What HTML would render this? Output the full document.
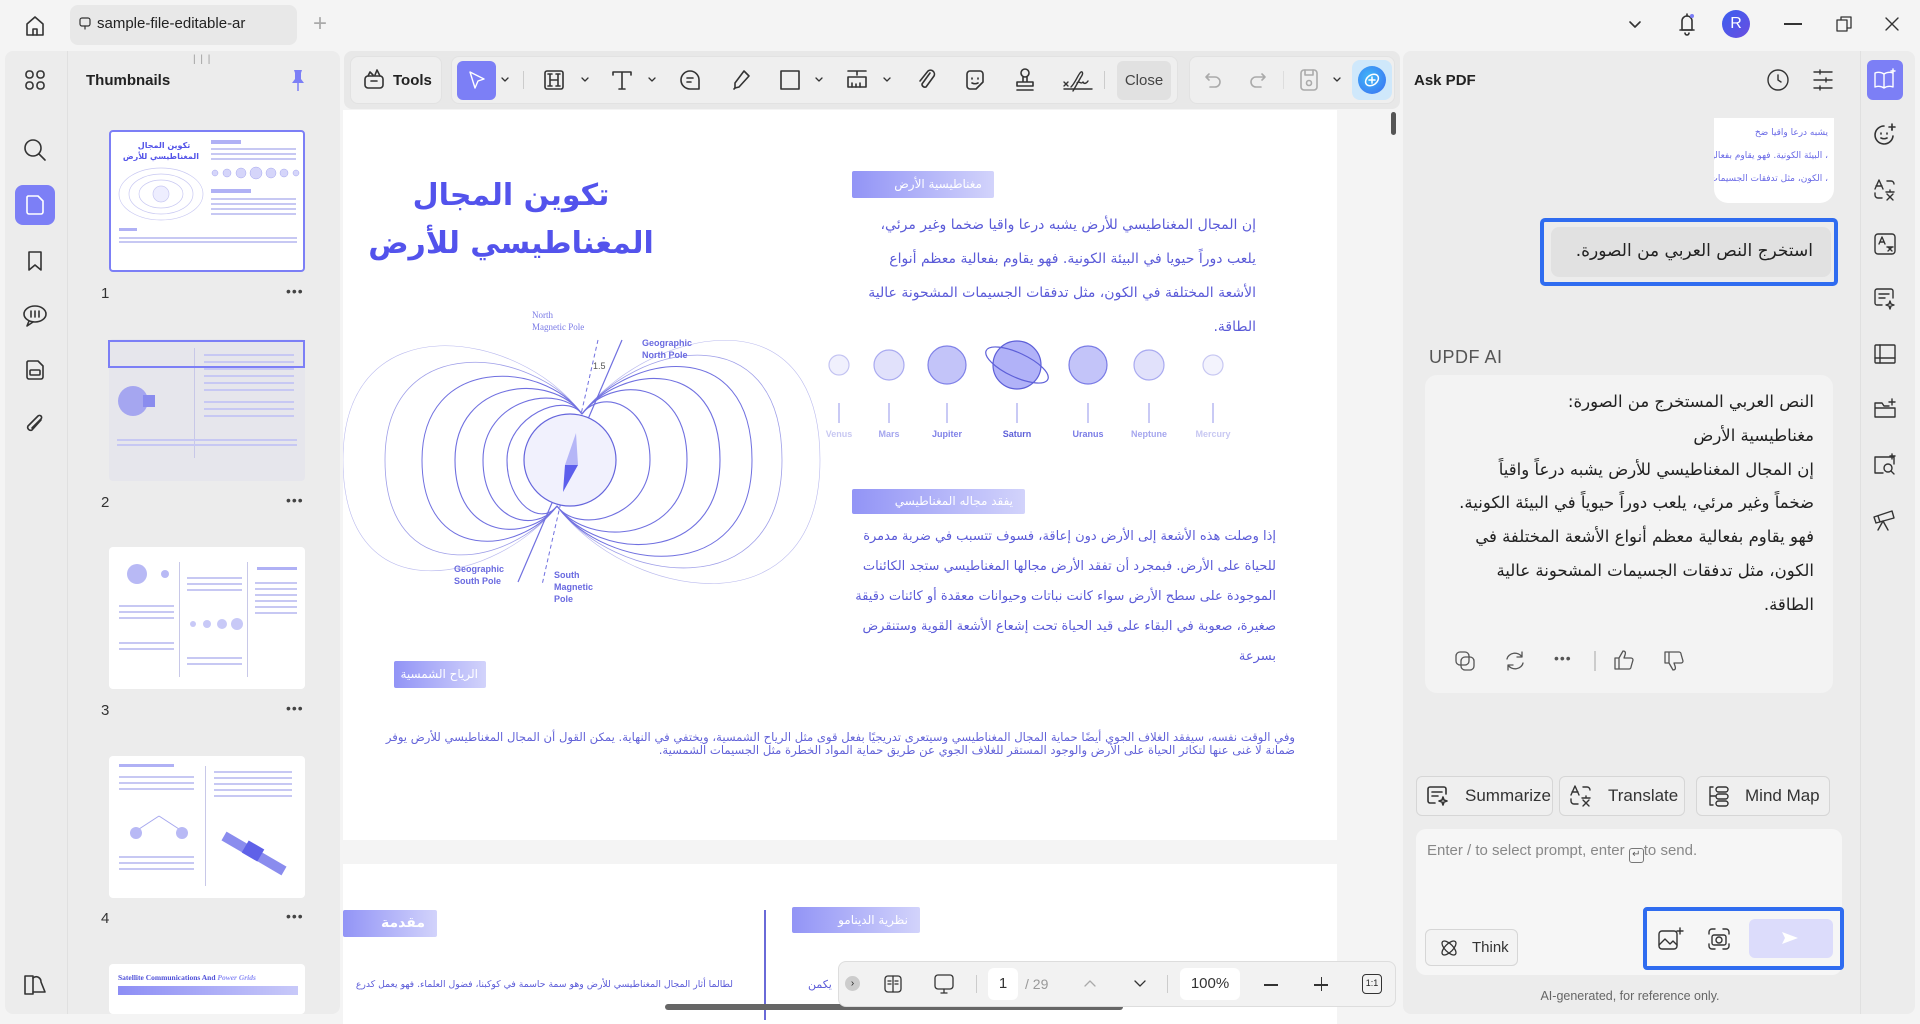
<!DOCTYPE html>
<html><head><meta charset="utf-8">
<style>
*{box-sizing:border-box;margin:0;padding:0}
body{width:1920px;height:1020px;overflow:hidden;background:#f4f4f4;font-family:"Liberation Sans","DejaVu Sans",sans-serif;position:relative;color:#222}
.abs{position:absolute}
.ar{font-family:"DejaVu Sans",sans-serif;direction:rtl}
svg.i{position:absolute;fill:none;stroke:#333;stroke-width:1.6;stroke-linecap:round;stroke-linejoin:round}
.lab{position:absolute;background:linear-gradient(90deg,#9294f6,#d2d3fb);color:#fff;font-family:"DejaVu Sans",sans-serif;font-size:12px;direction:rtl;text-align:right;padding-right:12px;border-radius:2px}
.p{position:absolute;direction:rtl;text-align:right;font-family:"DejaVu Sans",sans-serif;color:#5b5bd8;font-size:14px;white-space:nowrap}
.thumb{position:absolute;left:109px;width:196px;height:142px;background:#fff;border-radius:4px;overflow:hidden}
.tl{position:absolute;height:2px;background:#c7c8f3}
.num{position:absolute;left:101px;font-size:15px;color:#333}
.dots{position:absolute;left:286px;font-size:14px;color:#444;letter-spacing:1px}
.btn{position:absolute;border:1px solid #d6d6d6;border-radius:6px;background:#efefef;font-size:17px;color:#333;display:flex;align-items:center}
</style></head><body>

<!-- top bar -->
<svg class="i" style="left:22px;top:13px" width="26" height="26" viewBox="0 0 26 26"><path d="M5 22V11L13 4L21 11V22Z"/><path d="M11 22v-6h4v6"/></svg>
<div class="abs" style="left:70px;top:5px;width:227px;height:40px;background:#e8e8e8;border-radius:8px"></div>
<svg class="i" style="left:78px;top:17px;stroke-width:1.2" width="14" height="14" viewBox="0 0 14 14"><rect x="2" y="1" width="10" height="8" rx="2"/><path d="M7 9v3"/></svg>
<div class="abs" style="left:97px;top:15px;font-size:15px;color:#222">sample-file-editable-ar</div>
<div class="abs" style="left:313px;top:10px;font-size:24px;color:#aaa;font-weight:300">+</div>
<svg class="i" style="left:1627px;top:18px" width="16" height="14" viewBox="0 0 16 14"><path d="M3 4l5 5 5-5"/></svg>
<svg class="i" style="left:1676px;top:11px" width="22" height="26" viewBox="0 0 22 26"><path d="M6 19V10a5 5 0 0 1 10 0v9z"/><path d="M4 19h14M9 22a2 2 0 0 0 4 0M11 3v2"/><circle cx="16" cy="5" r="2" fill="#7a7cf5" stroke="none"/></svg>
<div class="abs" style="left:1722px;top:10px;width:28px;height:28px;border-radius:50%;background:linear-gradient(135deg,#3a5ef0,#6a4ee0);color:#fff;font-size:16px;text-align:center;line-height:28px">R</div>
<div class="abs" style="left:1784px;top:23px;width:18px;height:1.5px;background:#333"></div>
<svg class="i" style="left:1834px;top:14px;stroke-width:1.3" width="20" height="20" viewBox="0 0 20 20"><rect x="3" y="6" width="10" height="11"/><path d="M7 6V3h10v11h-4"/></svg>
<svg class="i" style="left:1884px;top:16px;stroke-width:1.4" width="16" height="16" viewBox="0 0 16 16"><path d="M2 2l12 12M14 2L2 14"/></svg>

<!-- left rail + thumbs panel -->
<div class="abs" style="left:5px;top:51px;width:335px;height:963px;background:#ececec;border-radius:8px"></div>
<div class="abs" style="left:67px;top:51px;width:1px;height:963px;background:#e0e0e0"></div>
<svg class="i" style="left:23px;top:68px" width="24" height="24" viewBox="0 0 24 24"><rect x="3" y="3" width="7" height="7" rx="3"/><rect x="14" y="3" width="7" height="7" rx="3"/><rect x="3" y="14" width="7" height="7" rx="3"/><rect x="14" y="14" width="7" height="7" rx="3"/></svg>
<svg class="i" style="left:22px;top:137px" width="26" height="26" viewBox="0 0 26 26"><circle cx="11" cy="11" r="8"/><path d="M17 17l6 6"/></svg>
<div class="abs" style="left:15px;top:185px;width:40px;height:40px;background:#7c7ff6;border-radius:8px"></div>
<svg class="i" style="left:23px;top:193px;stroke:#fff" width="24" height="24" viewBox="0 0 24 24"><path d="M5 3h10l5 5v11a2 2 0 0 1-2 2H6a2 2 0 0 1-2-2V4z"/></svg>
<svg class="i" style="left:23px;top:249px" width="24" height="24" viewBox="0 0 24 24"><path d="M6 3h12v18l-6-5-6 5z"/></svg>
<svg class="i" style="left:21px;top:302px" width="28" height="26" viewBox="0 0 28 26"><ellipse cx="14" cy="12" rx="11" ry="8"/><path d="M8 19l-2 5 6-4M10 9v6M14 9v6M18 9v6"/></svg>
<svg class="i" style="left:23px;top:358px" width="24" height="24" viewBox="0 0 24 24"><path d="M5 3h10l5 5v11a2 2 0 0 1-2 2H6a2 2 0 0 1-2-2V4z"/><rect x="7" y="12" width="10" height="5" rx="1"/></svg>
<svg class="i" style="left:23px;top:412px" width="24" height="26" viewBox="0 0 24 26"><path d="M18 8L9 18a3 3 0 0 1-4-4l10-10a2 2 0 0 1 3 3L9 16"/></svg>
<svg class="i" style="left:22px;top:973px" width="26" height="24" viewBox="0 0 26 24"><path d="M3 3h8v18H3z"/><path d="M11 5c4-3 8 0 8 4l4 10H11"/></svg>

<div class="abs" style="left:86px;top:72px;font-size:15px;font-weight:bold;color:#222">Thumbnails</div>
<div class="abs" style="left:193px;top:54px;font-size:10px;color:#999;letter-spacing:1px">| | |</div>
<svg class="abs" style="left:290px;top:68px" width="16" height="24" viewBox="0 0 16 24"><path d="M4 2h8l-1 3v6l3 4H2l3-4V5z" fill="#7c7ff6"/><path d="M8 15v8" stroke="#7c7ff6" stroke-width="1.5"/></svg>

<!-- thumb1 -->
<div class="thumb" style="top:130px;border:2px solid #7c7ff6">
 <div class="abs ar" style="left:18px;top:8px;width:70px;font-size:8px;color:#5454e8;font-weight:bold;line-height:11px;text-align:center;white-space:nowrap">تكوين المجال<br>المغناطيسي للأرض</div>
 <svg class="abs" style="left:5px;top:32px" width="90" height="60" viewBox="0 0 90 60"><g fill="none" stroke="#c8c8f2" stroke-width=".7"><ellipse cx="45" cy="30" rx="42" ry="26"/><ellipse cx="45" cy="30" rx="32" ry="20"/><ellipse cx="45" cy="30" rx="22" ry="14"/><circle cx="45" cy="30" r="8" fill="#eef"/></g></svg>
 <div class="tl" style="left:100px;top:8px;width:30px;background:#b0b1f5;height:4px"></div>
 <div class="tl" style="left:100px;top:16px;width:85px"></div><div class="tl" style="left:100px;top:21px;width:85px"></div><div class="tl" style="left:100px;top:26px;width:85px"></div>
 <svg class="abs" style="left:98px;top:34px" width="92" height="14" viewBox="0 0 92 14"><g fill="#d5d5fa" stroke="#a5a6ee" stroke-width=".5"><circle cx="6" cy="7" r="3"/><circle cx="18" cy="7" r="4"/><circle cx="32" cy="7" r="5"/><circle cx="47" cy="7" r="6"/><circle cx="62" cy="7" r="5"/><circle cx="75" cy="7" r="4"/><circle cx="87" cy="7" r="3"/></g></svg>
 <div class="tl" style="left:100px;top:57px;width:40px;background:#b0b1f5;height:4px"></div>
 <div class="tl" style="left:100px;top:66px;width:85px"></div><div class="tl" style="left:100px;top:71px;width:85px"></div><div class="tl" style="left:100px;top:76px;width:85px"></div><div class="tl" style="left:100px;top:81px;width:85px"></div>
 <div class="tl" style="left:8px;top:96px;width:18px;background:#b0b1f5;height:3px"></div>
 <div class="tl" style="left:8px;top:105px;width:178px"></div><div class="tl" style="left:8px;top:109px;width:178px"></div>
</div>
<div class="num" style="top:285px">1</div><div class="dots" style="top:283px">•••</div>
<!-- thumb2 -->
<div class="thumb" style="top:339px;background:#e6e6ec">
 <div class="abs" style="left:85px;top:9px;width:1px;height:110px;background:#c8c8e8"></div>
 <svg class="abs" style="left:6px;top:42px" width="55" height="40" viewBox="0 0 55 40"><ellipse cx="18" cy="20" rx="15" ry="15" fill="#a5a6f0"/><rect x="28" y="14" width="12" height="12" fill="#8a8cee"/></svg>
 <div class="tl" style="left:95px;top:15px;width:90px"></div><div class="tl" style="left:95px;top:22px;width:90px"></div><div class="tl" style="left:95px;top:29px;width:90px"></div><div class="tl" style="left:95px;top:36px;width:90px"></div><div class="tl" style="left:95px;top:43px;width:90px"></div><div class="tl" style="left:95px;top:50px;width:90px"></div>
 <div class="tl" style="left:95px;top:62px;width:90px"></div><div class="tl" style="left:95px;top:69px;width:90px"></div><div class="tl" style="left:95px;top:76px;width:90px"></div>
 <div class="tl" style="left:8px;top:100px;width:180px"></div><div class="tl" style="left:8px;top:105px;width:180px"></div>
</div>
<div class="abs" style="left:108px;top:340px;width:197px;height:28px;border:2px solid #7c7ff6"></div>
<div class="num" style="top:494px">2</div><div class="dots" style="top:492px">•••</div>
<!-- thumb3 -->
<div class="thumb" style="top:547px">
 <div class="abs" style="left:70px;top:15px;width:1px;height:115px;background:#c8c8e8"></div>
 <div class="abs" style="left:138px;top:15px;width:1px;height:115px;background:#c8c8e8"></div>
 <svg class="abs" style="left:10px;top:12px" width="55" height="30" viewBox="0 0 55 30"><circle cx="18" cy="15" r="10" fill="#b8b9f5"/><circle cx="46" cy="15" r="4" fill="#b8b9f5"/></svg>
 <div class="tl" style="left:148px;top:20px;width:40px;height:3px;background:#b0b1f5"></div>
 <div class="tl" style="left:10px;top:58px;width:55px"></div><div class="tl" style="left:10px;top:64px;width:55px"></div><div class="tl" style="left:10px;top:70px;width:55px"></div><div class="tl" style="left:10px;top:95px;width:55px"></div><div class="tl" style="left:10px;top:101px;width:55px"></div>
 <div class="tl" style="left:78px;top:30px;width:55px"></div><div class="tl" style="left:78px;top:36px;width:55px"></div><div class="tl" style="left:78px;top:42px;width:55px"></div><div class="tl" style="left:78px;top:110px;width:55px"></div><div class="tl" style="left:78px;top:116px;width:55px"></div>
 <svg class="abs" style="left:78px;top:70px" width="58" height="14"><g fill="#c8c9f7"><circle cx="6" cy="7" r="3"/><circle cx="20" cy="7" r="4"/><circle cx="35" cy="7" r="5"/><circle cx="50" cy="7" r="6"/></g></svg>
 <div class="tl" style="left:146px;top:35px;width:42px"></div><div class="tl" style="left:146px;top:41px;width:42px"></div><div class="tl" style="left:146px;top:47px;width:42px"></div><div class="tl" style="left:146px;top:53px;width:42px"></div><div class="tl" style="left:146px;top:59px;width:42px"></div><div class="tl" style="left:146px;top:65px;width:42px"></div>
</div>
<div class="num" style="top:702px">3</div><div class="dots" style="top:700px">•••</div>
<!-- thumb4 -->
<div class="thumb" style="top:756px">
 <div class="abs" style="left:96px;top:10px;width:1px;height:120px;background:#c8c8e8"></div>
 <div class="tl" style="left:10px;top:8px;width:55px;height:3px;background:#b0b1f5"></div>
 <div class="tl" style="left:10px;top:20px;width:75px"></div><div class="tl" style="left:10px;top:26px;width:75px"></div><div class="tl" style="left:10px;top:32px;width:75px"></div>
 <svg class="abs" style="left:15px;top:55px" width="70" height="30"><path d="M35 5L12 20M35 5L58 20" stroke="#a5a6ee"/><circle cx="12" cy="22" r="6" fill="#b8b9f5"/><circle cx="58" cy="22" r="6" fill="#b8b9f5"/></svg>
 <div class="tl" style="left:10px;top:100px;width:75px"></div><div class="tl" style="left:10px;top:106px;width:75px"></div><div class="tl" style="left:10px;top:112px;width:75px"></div>
 <div class="tl" style="left:105px;top:15px;width:78px"></div><div class="tl" style="left:105px;top:21px;width:78px"></div><div class="tl" style="left:105px;top:27px;width:78px"></div><div class="tl" style="left:105px;top:33px;width:78px"></div><div class="tl" style="left:105px;top:39px;width:78px"></div>
 <svg class="abs" style="left:110px;top:70px" width="70" height="50"><path d="M5 10L65 45" stroke="#8a8cee" stroke-width="10"/><rect x="25" y="18" width="18" height="14" fill="#5f61e8" transform="rotate(30 34 25)"/></svg>
</div>
<div class="num" style="top:910px">4</div><div class="dots" style="top:908px">•••</div>
<div class="thumb" style="top:964px;height:50px">
 <div class="abs" style="left:9px;top:9px;font-family:'Liberation Serif',serif;font-size:7.5px;color:#4f50d8;font-weight:bold">Satellite Communications And <i style="color:#8d8ef5">Power Grids</i></div>
 <div class="abs" style="left:9px;top:22px;width:180px;height:9px;background:linear-gradient(90deg,#8d8ef5,#c8c9f9)"></div>
</div>

<!-- toolbar -->
<div class="abs" style="left:344px;top:51px;width:1056px;height:58px;background:#e8e8e8;border-radius:8px"></div>
<div class="abs" style="left:350px;top:56px;width:92px;height:48px;background:#efefef;border-radius:8px;border:1px solid #e2e2e2"></div>
<svg class="i" style="left:362px;top:67px" width="24" height="24" viewBox="0 0 24 24"><rect x="3" y="9" width="18" height="12" rx="3"/><path d="M9 14h6M6 9l2-4 3 3M13 8l2-5 3 6"/></svg>
<div class="abs" style="left:393px;top:72px;font-size:15px;font-weight:bold">Tools</div>
<div class="abs" style="left:451px;top:56px;width:727px;height:48px;background:#efefef;border-radius:8px;border:1px solid #e2e2e2"></div>
<div class="abs" style="left:457px;top:61px;width:39px;height:39px;background:#7c7ff6;border-radius:6px"></div>
<svg class="i" style="left:466px;top:69px;stroke:#fff;stroke-width:1.4" width="22" height="22" viewBox="0 0 22 22"><path d="M4 3l14 7-6 2-3 7z"/></svg>
<svg class="i" style="left:500px;top:76px;stroke-width:1.3" width="10" height="8" viewBox="0 0 10 8"><path d="M2 2l3 3 3-3"/></svg>
<div class="abs" style="left:523px;top:71px;width:1px;height:18px;background:#ccc"></div>
<svg class="i" style="left:542px;top:68px" width="24" height="24" viewBox="0 0 24 24"><rect x="3" y="3" width="18" height="18" rx="2"/><path d="M8 6v12M16 6v12M8 12h8M6 6h4M14 6h4M6 18h4M14 18h4"/></svg>
<svg class="i" style="left:580px;top:76px;stroke-width:1.3" width="10" height="8" viewBox="0 0 10 8"><path d="M2 2l3 3 3-3"/></svg>
<svg class="i" style="left:610px;top:68px" width="24" height="24" viewBox="0 0 24 24"><path d="M3 4h18M12 4v17M9 21h6M3 4v3M21 4v3"/></svg>
<svg class="i" style="left:647px;top:76px;stroke-width:1.3" width="10" height="8" viewBox="0 0 10 8"><path d="M2 2l3 3 3-3"/></svg>
<svg class="i" style="left:678px;top:68px" width="24" height="24" viewBox="0 0 24 24"><path d="M12 3a9 9 0 1 0 0 18h9v-9a9 9 0 0 0-9-9z"/><path d="M9 10h6M9 14h4"/></svg>
<svg class="i" style="left:729px;top:68px" width="24" height="24" viewBox="0 0 24 24"><path d="M15 3l5 5-10 11-4 1 0-5z"/><path d="M5 21l1-1"/></svg>
<svg class="i" style="left:779px;top:69px" width="22" height="22" viewBox="0 0 22 22"><rect x="2" y="2" width="18" height="18"/></svg>
<svg class="i" style="left:814px;top:76px;stroke-width:1.3" width="10" height="8" viewBox="0 0 10 8"><path d="M2 2l3 3 3-3"/></svg>
<svg class="i" style="left:845px;top:68px" width="24" height="24" viewBox="0 0 24 24"><path d="M3 3h18M12 3v4M3 9h18v10H3z"/><path d="M7 15v4M11 16v3M15 15v4"/></svg>
<svg class="i" style="left:882px;top:76px;stroke-width:1.3" width="10" height="8" viewBox="0 0 10 8"><path d="M2 2l3 3 3-3"/></svg>
<svg class="i" style="left:914px;top:67px" width="24" height="26" viewBox="0 0 24 26"><path d="M16 6L8 17a3 3 0 0 0 4 3l8-11a4 4 0 0 0-6-5L6 14"/></svg>
<svg class="i" style="left:963px;top:68px" width="24" height="24" viewBox="0 0 24 24"><path d="M4 6a3 3 0 0 1 3-3h10a3 3 0 0 1 3 3v8l-7 7H7a3 3 0 0 1-3-3z"/><path d="M9 10v1M15 10v1M9 15c2 1 4 1 6 0"/></svg>
<svg class="i" style="left:1013px;top:67px" width="24" height="26" viewBox="0 0 24 26"><circle cx="12" cy="6" r="4"/><path d="M10 10v5M14 10v5M4 15h16v4H4zM4 23h16"/></svg>
<svg class="i" style="left:1061px;top:67px;stroke-width:1.4" width="34" height="26" viewBox="0 0 34 26"><path d="M3 15l4 4M7 15l-4 4M10 20c4-4 6-10 9-14 2-3 4 0 1 4l-8 14M16 16c2-3 4 2 6-1 1 2 3 2 5-1"/><path d="M3 22h28"/></svg>
<div class="abs" style="left:1104px;top:71px;width:1px;height:18px;background:#ccc"></div>
<div class="abs" style="left:1117px;top:61px;width:54px;height:39px;background:#e1e1e1;border-radius:6px;font-size:15px;color:#444;text-align:center;line-height:39px">Close</div>
<div class="abs" style="left:1189px;top:56px;width:206px;height:48px;background:#efefef;border-radius:8px;border:1px solid #e2e2e2"></div>
<svg class="i" style="left:1203px;top:70px;stroke:#aaa" width="20" height="20" viewBox="0 0 20 20"><path d="M6 4L3 7l3 3M3 7h9a5 5 0 0 1 0 10H7"/></svg>
<svg class="i" style="left:1248px;top:70px;stroke:#aaa" width="20" height="20" viewBox="0 0 20 20"><path d="M14 4l3 3-3 3M17 7H8a5 5 0 0 0 0 10h5"/></svg>
<div class="abs" style="left:1283px;top:71px;width:1px;height:18px;background:#ddd"></div>
<svg class="i" style="left:1299px;top:68px;stroke:#aaa" width="20" height="24" viewBox="0 0 20 24"><rect x="2" y="2" width="16" height="20" rx="3"/><path d="M6 2v5h8V2"/><circle cx="10" cy="15" r="2.5"/></svg>
<svg class="i" style="left:1332px;top:76px;stroke-width:1.3" width="10" height="8" viewBox="0 0 10 8"><path d="M2 2l3 3 3-3"/></svg>
<div class="abs" style="left:1352px;top:60px;width:40px;height:40px;background:#cfe8fb;border-radius:8px"></div>
<div class="abs" style="left:1358px;top:66px;width:28px;height:28px;border-radius:50%;background:radial-gradient(circle at 40% 40%,#40b8f8,#3b6cf2)"></div>
<svg class="i" style="left:1362px;top:70px;stroke:#fff;stroke-width:1.5" width="20" height="20" viewBox="0 0 20 20"><ellipse cx="10" cy="10" rx="7" ry="5" transform="rotate(-35 10 10)"/><path d="M10 7v6M7 10h6"/></svg>

<!-- document area -->
<div class="abs" style="left:343px;top:110px;width:994px;height:730px;background:#fff"></div>
<div class="abs" style="left:1391px;top:112px;width:5px;height:23px;background:#555;border-radius:3px"></div>
<div class="abs ar" style="left:311px;top:172px;width:400px;text-align:center;font-size:30px;font-weight:bold;color:#5353ec;line-height:48px;white-space:nowrap">تكوين المجال<br>المغناطيسي للأرض</div>

<svg class="abs" style="left:343px;top:300px" width="500" height="320" viewBox="343 300 500 320">
 <g fill="none" stroke="#7070e0">
  <path d="M582 414 C521 330 343 301 343 460 C343 619 500 581 557 506" stroke-width=".6" stroke="#b9b9ee"/>
  <path d="M582 414 C532 346 385 330 385 460 C385 590 511 567 557 506" stroke-width=".8" stroke="#9d9de8"/>
  <path d="M582 414 C542 359 422 356 422 460 C422 564 520 555 557 506" stroke-width="1"/>
  <path d="M582 414 C551 371 455 380 455 460 C455 540 528 544 557 506" stroke-width="1.1"/>
  <path d="M582 414 C559 382 483 399 483 460 C483 521 535 535 557 506" stroke-width="1.1"/>
  <path d="M582 414 C565 391 507 416 507 460 C507 504 541 527 557 506" stroke-width="1.1"/>
  <path d="M582 414 C645 331 820 285 820 460 C820 635 625 599 557 506" stroke-width=".6" stroke="#b9b9ee"/>
  <path d="M582 414 C635 344 782 312 782 460 C782 608 614 584 557 506" stroke-width=".8" stroke="#9d9de8"/>
  <path d="M582 414 C628 354 752 333 752 460 C752 587 606 573 557 506" stroke-width="1"/>
  <path d="M582 414 C620 365 720 355 720 460 C720 565 598 562 557 506" stroke-width="1.1"/>
  <path d="M582 414 C611 375 687 378 687 460 C687 542 589 549 557 506" stroke-width="1.1"/>
  <path d="M582 414 C602 388 650 404 650 460 C650 516 579 536 557 506" stroke-width="1.1"/>
  <path d="M622 340 L 518 582" stroke-width="1.2"/>
  <path d="M598 340 L 542 585" stroke-width="1" stroke-dasharray="4 3"/>
 </g>
 <circle cx="570" cy="460" r="46" fill="#f1f1fd" stroke="#6565dc" stroke-width="1.2"/>
 <path d="M576 433 L565 465 L578 465Z" fill="#b5b6f7"/>
 <path d="M565 465 L578 465 L563 492Z" fill="#5d5fec"/>
 <text x="532" y="318" font-family="Liberation Serif" font-size="9" fill="#7a7ae6">North</text>
 <text x="532" y="330" font-family="Liberation Serif" font-size="9" fill="#7a7ae6">Magnetic Pole</text>
 <text x="642" y="346" font-family="Liberation Sans" font-size="9" font-weight="bold" fill="#6a6ae0">Geographic</text>
 <text x="642" y="358" font-family="Liberation Sans" font-size="9" font-weight="bold" fill="#6a6ae0">North Pole</text>
 <text x="593" y="369" font-family="Liberation Sans" font-size="9" fill="#555">1.5</text>
 <text x="454" y="572" font-family="Liberation Sans" font-size="9" font-weight="bold" fill="#6a6ae0">Geographic</text>
 <text x="454" y="584" font-family="Liberation Sans" font-size="9" font-weight="bold" fill="#6a6ae0">South Pole</text>
 <text x="554" y="578" font-family="Liberation Sans" font-size="9" font-weight="bold" fill="#6a6ae0">South</text>
 <text x="554" y="590" font-family="Liberation Sans" font-size="9" font-weight="bold" fill="#6a6ae0">Magnetic</text>
 <text x="554" y="602" font-family="Liberation Sans" font-size="9" font-weight="bold" fill="#6a6ae0">Pole</text>
</svg>

<div class="lab" style="left:852px;top:171px;width:142px;height:27px;line-height:27px">مغناطيسية الأرض</div>
<div class="p" style="right:664px;top:208px;line-height:34px">إن المجال المغناطيسي للأرض يشبه درعا واقيا ضخما وغير مرئي،<br>يلعب دوراً حيويا في البيئة الكونية. فهو يقاوم بفعالية معظم أنواع<br>الأشعة المختلفة في الكون، مثل تدفقات الجسيمات المشحونة عالية<br>الطاقة.</div>

<svg class="abs" style="left:820px;top:330px" width="470" height="115" viewBox="820 330 470 115">
 <g stroke="#7a7ae6" stroke-width="1.2">
  <circle cx="839" cy="365" r="10" fill="#f0f0fd" stroke="#c4c4f2"/>
  <circle cx="889" cy="365" r="15" fill="#e1e1fb" stroke="#a9aaf0"/>
  <circle cx="947" cy="365" r="19" fill="#c3c4f9" stroke="#8082e8"/>
  <circle cx="1017" cy="365" r="24" fill="#b1b2f8" stroke="#5d5fd8"/>
  <ellipse cx="1017" cy="365" rx="34" ry="12" fill="none" stroke="#5d5fd8" transform="rotate(25 1017 365)"/>
  <circle cx="1088" cy="365" r="19" fill="#c3c4f9" stroke="#7a7ce6"/>
  <circle cx="1149" cy="365" r="15" fill="#e1e1fb" stroke="#a9aaf0"/>
  <circle cx="1213" cy="365" r="10" fill="#f3f3fd" stroke="#c8c8f2"/>
  <path d="M839 403v20M889 403v20M947 403v20M1017 403v20M1088 403v20M1149 403v20M1213 403v20" stroke="#a5a6ee"/>
 </g>
 <g font-family="Liberation Sans" font-size="9" font-weight="bold" text-anchor="middle">
  <text x="839" y="437" fill="#c8c8f2">Venus</text><text x="889" y="437" fill="#a5a6ee">Mars</text><text x="947" y="437" fill="#8082e8">Jupiter</text><text x="1017" y="437" fill="#5d5fd8">Saturn</text><text x="1088" y="437" fill="#7a7ce6">Uranus</text><text x="1149" y="437" fill="#a5a6ee">Neptune</text><text x="1213" y="437" fill="#c8c8f2">Mercury</text>
 </g>
</svg>

<div class="lab" style="left:852px;top:489px;width:173px;height:25px;line-height:25px">يفقد مجاله المغناطيسي</div>
<div class="p" style="right:644px;top:522px;line-height:30px;font-size:13px">إذا وصلت هذه الأشعة إلى الأرض دون إعاقة، فسوف تتسبب في ضربة مدمرة<br>للحياة على الأرض. فبمجرد أن تفقد الأرض مجالها المغناطيسي ستجد الكائنات<br>الموجودة على سطح الأرض سواء كانت نباتات وحيوانات معقدة أو كائنات دقيقة<br>صغيرة، صعوبة في البقاء على قيد الحياة تحت إشعاع الأشعة القوية وستنقرض<br>بسرعة</div>
<div class="lab" style="left:394px;top:661px;width:92px;height:27px;line-height:27px;padding-right:8px">الرياح الشمسية</div>
<div class="p" style="right:625px;top:731px;font-size:11.6px;line-height:13px;color:#6262d8">وفي الوقت نفسه، سيفقد الغلاف الجوي أيضًا حماية المجال المغناطيسي وسيتعرى تدريجيًا بفعل قوى مثل الرياح الشمسية، ويختفي في النهاية. يمكن القول أن المجال المغناطيسي للأرض يوفر<br>ضمانة لا غنى عنها لتكاثر الحياة على الأرض والوجود المستقر للغلاف الجوي عن طريق حماية المواد الخطرة مثل الجسيمات الشمسية.</div>

<!-- page 2 -->
<div class="abs" style="left:343px;top:864px;width:994px;height:160px;background:#fff"></div>
<div class="lab" style="left:343px;top:910px;width:94px;height:27px;line-height:27px;font-size:14px;font-weight:bold">مقدمة</div>
<div class="lab" style="left:792px;top:907px;width:128px;height:26px;line-height:26px">نظرية الدينامو</div>
<div class="abs" style="left:764px;top:910px;width:1.5px;height:110px;background:#6a6ad8"></div>
<div class="p" style="right:1187px;top:979px;font-size:9.3px">لطالما أثار المجال المغناطيسي للأرض وهو سمة حاسمة في كوكبنا، فضول العلماء. فهو يعمل كدرع</div>
<div class="p" style="left:808px;top:978px;font-size:11px;direction:ltr">يكمن</div>
<div class="abs" style="left:665px;top:1004px;width:458px;height:6px;background:#666;border-radius:3px"></div>

<!-- bottom floating bar -->
<div class="abs" style="left:838px;top:961px;width:558px;height:46px;background:#f2f2f2;border-radius:8px;border:1px solid #ddd"></div>
<div class="abs" style="left:845px;top:976px;width:15px;height:15px;border-radius:50%;background:#ccc;font-size:10px;text-align:center;line-height:15px">›</div>
<svg class="i" style="left:882px;top:973px;stroke-width:1.3" width="22" height="22" viewBox="0 0 22 22"><rect x="3" y="3" width="16" height="16" rx="3"/><path d="M11 3v16M6 8h3M6 11h3M13 8h3M13 11h3"/></svg>
<svg class="i" style="left:932px;top:972px;stroke-width:1.3" width="24" height="24" viewBox="0 0 24 24"><rect x="3" y="3" width="18" height="14" rx="3"/><path d="M12 17v4M9 21h6"/></svg>
<div class="abs" style="left:976px;top:975px;width:1px;height:18px;background:#ccc"></div>
<div class="abs" style="left:988px;top:968px;width:30px;height:32px;background:#fff;border-radius:6px;text-align:center;line-height:32px;font-size:15px;color:#333">1</div>
<div class="abs" style="left:1025px;top:976px;font-size:14px;color:#999">/ 29</div>
<svg class="i" style="left:1082px;top:977px;stroke:#aaa;stroke-width:1.3" width="16" height="12"><path d="M3 9l5-5 5 5"/></svg>
<svg class="i" style="left:1132px;top:978px;stroke-width:1.3" width="16" height="12"><path d="M3 3l5 5 5-5"/></svg>
<div class="abs" style="left:1167px;top:975px;width:1px;height:18px;background:#ccc"></div>
<div class="abs" style="left:1180px;top:968px;width:60px;height:32px;background:#fff;border-radius:6px;text-align:center;line-height:32px;font-size:15px;color:#333">100%</div>
<div class="abs" style="left:1264px;top:984px;width:14px;height:1.5px;background:#333"></div>
<div class="abs" style="left:1314px;top:984px;width:14px;height:1.5px;background:#333"></div><div class="abs" style="left:1320.5px;top:977px;width:1.5px;height:14px;background:#333"></div>
<div class="abs" style="left:1362px;top:974px;width:20px;height:20px;border:1.4px solid #333;border-radius:4px;font-size:9px;text-align:center;line-height:17px">1:1</div>

<!-- right panel -->
<div class="abs" style="left:1403px;top:51px;width:512px;height:963px;background:#ececec;border-radius:8px"></div>
<div class="abs" style="left:1860px;top:51px;width:1px;height:963px;background:#e0e0e0"></div>
<div class="abs" style="left:1414px;top:72px;font-size:15px;font-weight:bold">Ask PDF</div>
<svg class="i" style="left:1765px;top:67px;stroke-width:1.4" width="26" height="26" viewBox="0 0 26 26"><circle cx="13" cy="13" r="10"/><path d="M13 8v5l3 2"/></svg>
<svg class="i" style="left:1811px;top:67px;stroke-width:1.4" width="24" height="26" viewBox="0 0 24 26"><path d="M3 5h18M3 13h18M3 21h18M9 3v4M15 11v4M9 19v4"/></svg>
<div class="abs" style="left:1867px;top:60px;width:36px;height:40px;background:#7c7ff6;border-radius:6px"></div>
<svg class="i" style="left:1872px;top:67px;stroke:#fff;stroke-width:1.4" width="26" height="26" viewBox="0 0 26 26"><path d="M3 6c3-1 6-1 9 1v14c-3-2-6-2-9-1zM12 7c3-2 6-2 9-1v14c-3-1-6-1-9 1"/><path d="M21 2v4M19 4h4"/></svg>
<svg class="i" style="left:1872px;top:122px" width="26" height="26" viewBox="0 0 26 26"><path d="M20 8v-1M12 4a9 9 0 1 0 9 10"/><path d="M9 11v1M15 11v1M9 16c2 1 4 1 6 0M20 2v6M17 5h6"/></svg>
<svg class="i" style="left:1872px;top:177px;stroke-width:1.4" width="26" height="26" viewBox="0 0 26 26"><path d="M3 12L7 3l4 9M4 9h6M15 4h4a3 3 0 0 1 3 3M3 16v2a3 3 0 0 0 3 3h4M14 15h8M18 13v2M15 23l6-6M15 17l6 6"/></svg>
<svg class="i" style="left:1872px;top:231px;stroke-width:1.4" width="26" height="26" viewBox="0 0 26 26"><rect x="3" y="3" width="20" height="20" rx="3"/><path d="M7 13l3-7 3 7M8 11h4M15 16h6M16 20l4-4M16 16l4 4"/></svg>
<svg class="i" style="left:1872px;top:286px;stroke-width:1.4" width="26" height="26" viewBox="0 0 26 26"><path d="M21 12V5a2 2 0 0 0-2-2H5a2 2 0 0 0-2 2v12a2 2 0 0 0 2 2h5"/><path d="M7 8h10M7 12h6M18 15l1 3 3 1-3 1-1 3-1-3-3-1 3-1z"/></svg>
<svg class="i" style="left:1872px;top:341px;stroke-width:1.4" width="26" height="26" viewBox="0 0 26 26"><rect x="3" y="4" width="20" height="18" rx="1"/><path d="M8 4v18M3 17h20"/></svg>
<svg class="i" style="left:1872px;top:396px;stroke-width:1.4" width="26" height="26" viewBox="0 0 26 26"><path d="M3 7v14h20v-9M3 7h7l2 3h5M3 12h20"/><path d="M20 3v6M17 6h6"/></svg>
<svg class="i" style="left:1872px;top:452px;stroke-width:1.4" width="26" height="26" viewBox="0 0 26 26"><path d="M22 12V5H3v16h8"/><circle cx="16" cy="16" r="4"/><path d="M19 19l3 3M20 2v5M18 4h5"/></svg>
<svg class="i" style="left:1871px;top:507px;stroke-width:1.4" width="28" height="26" viewBox="0 0 28 26"><path d="M3 10l18-6 2 7-18 5z"/><path d="M12 14l-5 9M12 14l5 9M7 9l2 6"/></svg>

<!-- image preview -->
<div class="abs" style="left:1714px;top:118px;width:120px;height:85px;background:#fff;border-radius:0 0 14px 14px;overflow:hidden">
 <div class="p" style="right:6px;top:4px;font-size:9px;line-height:23px;color:#6a6ae6">يشبه درعا واقيا ضخ<br>، البيئة الكونية. فهو يقاوم بفعالية<br>، الكون، مثل تدفقات الجسيمات ا</div>
</div>
<!-- user msg -->
<div class="abs" style="left:1540px;top:218px;width:298px;height:68px;border:4px solid #2f6cf0;border-radius:5px"></div>
<div class="abs" style="left:1551px;top:227px;width:280px;height:50px;background:#e1e1e1;border-radius:8px"></div>
<div class="abs ar" style="left:1551px;top:241px;width:262px;text-align:right;font-size:17px;color:#222">استخرج النص العربي من الصورة.</div>
<div class="abs" style="left:1429px;top:347px;font-size:18px;color:#555;letter-spacing:.5px">UPDF AI</div>
<div class="abs" style="left:1425px;top:375px;width:408px;height:318px;background:#f3f3f3;border-radius:12px"></div>
<div class="abs ar" style="left:1400px;top:385px;width:414px;text-align:right;font-size:16.5px;line-height:33.8px;color:#222;white-space:nowrap">النص العربي المستخرج من الصورة:<br>مغناطيسية الأرض<br>إن المجال المغناطيسي للأرض يشبه درعاً واقياً<br>ضخماً وغير مرئي، يلعب دوراً حيوياً في البيئة الكونية.<br>فهو يقاوم بفعالية معظم أنواع الأشعة المختلفة في<br>الكون، مثل تدفقات الجسيمات المشحونة عالية<br>الطاقة.</div>
<svg class="i" style="left:1453px;top:649px;stroke:#555;stroke-width:1.3" width="24" height="24" viewBox="0 0 24 24"><rect x="3" y="3" width="13" height="13" rx="4"/><rect x="8" y="8" width="13" height="13" rx="4"/></svg>
<svg class="i" style="left:1503px;top:649px;stroke:#555;stroke-width:1.3" width="24" height="24" viewBox="0 0 24 24"><path d="M4 10a8 7 0 0 1 15-2M20 14a8 7 0 0 1-15 2M19 3v5h-5M5 21v-5h5"/></svg>
<div class="abs" style="left:1554px;top:650px;font-size:14px;color:#555;letter-spacing:1px">•••</div>
<div class="abs" style="left:1594px;top:651px;width:1.5px;height:20px;background:#ccc"></div>
<svg class="i" style="left:1612px;top:648px;stroke:#555;stroke-width:1.3" width="24" height="24" viewBox="0 0 24 24"><path d="M3 10h4v11H3zM7 10l4-7c2 0 3 1 2 4l-1 3h7a2 2 0 0 1 2 2l-2 7a2 2 0 0 1-2 2H7"/></svg>
<svg class="i" style="left:1662px;top:649px;stroke:#555;stroke-width:1.3" width="24" height="24" viewBox="0 0 24 24"><path d="M3 3h4v11H3zM7 14l4 7c2 0 3-1 2-4l-1-3h7a2 2 0 0 0 2-2l-2-7a2 2 0 0 0-2-2H7"/></svg>

<div class="btn" style="left:1416px;top:776px;width:137px;height:40px"><svg class="i" style="position:static;margin:0 14px 0 8px" width="26" height="24" viewBox="0 0 26 24"><path d="M21 10V5a2 2 0 0 0-2-2H5a2 2 0 0 0-2 2v12a2 2 0 0 0 2 2h5"/><path d="M7 8h10M7 12h6M18 13l1 3 3 1-3 1-1 3-1-3-3-1 3-1z"/></svg>Summarize</div>
<div class="btn" style="left:1559px;top:776px;width:126px;height:40px"><svg class="i" style="position:static;margin:0 14px 0 8px;stroke-width:1.4" width="26" height="24" viewBox="0 0 26 24"><path d="M3 11L7 2l4 9M4 8h6M15 3h4a3 3 0 0 1 3 3M3 15v2a3 3 0 0 0 3 3h4M14 14h8M18 12v2M15 22l6-6M15 16l6 6"/></svg>Translate</div>
<div class="btn" style="left:1696px;top:776px;width:134px;height:40px"><svg class="i" style="position:static;margin:0 14px 0 8px;stroke-width:1.4" width="26" height="24" viewBox="0 0 26 24"><path d="M8 3H5v18h3M5 12h5"/><rect x="11" y="3" width="12" height="5" rx="2.5"/><rect x="11" y="10" width="12" height="5" rx="2.5"/><rect x="11" y="17" width="12" height="5" rx="2.5"/></svg>Mind Map</div>

<div class="abs" style="left:1416px;top:829px;width:426px;height:146px;background:#f6f6f6;border-radius:10px"></div>
<div class="abs" style="left:1427px;top:842px;font-size:15px;color:#888">Enter / to select prompt, enter <span style="display:inline-block;width:15px;height:15px;border:1.3px solid #777;border-radius:3px;vertical-align:-2px;font-size:10px;line-height:12px;text-align:center;color:#555">↵</span>to send.</div>
<div class="btn" style="left:1425px;top:929px;width:93px;height:37px;background:#f3f3f3;font-size:15px"><svg class="i" style="position:static;margin:0 12px 0 12px;stroke-width:1.3" width="22" height="22" viewBox="0 0 22 22"><ellipse cx="11" cy="11" rx="9" ry="4" transform="rotate(45 11 11)"/><ellipse cx="11" cy="11" rx="9" ry="4" transform="rotate(-45 11 11)"/></svg>Think</div>
<div class="abs" style="left:1643px;top:907px;width:201px;height:63px;border:4px solid #2f6cf0;border-radius:4px"></div>
<svg class="i" style="left:1656px;top:926px;stroke-width:1.4" width="28" height="26" viewBox="0 0 28 26"><rect x="3" y="5" width="18" height="18" rx="3"/><path d="M3 19l6-6 5 5 3-3 4 4M24 2v6M21 5h6"/></svg>
<svg class="i" style="left:1706px;top:926px;stroke-width:1.4" width="26" height="26" viewBox="0 0 26 26"><path d="M3 8V6a3 3 0 0 1 3-3h3M17 3h3a3 3 0 0 1 3 3v2M3 18v2a3 3 0 0 0 3 3h3M17 23h3a3 3 0 0 0 3-3v-2"/><rect x="6" y="9" width="14" height="10" rx="2"/><circle cx="13" cy="14" r="3"/></svg>
<div class="abs" style="left:1749px;top:919px;width:84px;height:39px;background:#dcdcfb;border-radius:6px"></div>
<svg class="abs" style="left:1780px;top:930px" width="20" height="16" viewBox="0 0 20 16"><path d="M2 2l16 6-16 6 3-6z" fill="#fff"/></svg>
<div class="abs" style="left:1540px;top:989px;width:180px;text-align:center;font-size:12.5px;color:#666">AI-generated, for reference only.</div>
</body></html>
